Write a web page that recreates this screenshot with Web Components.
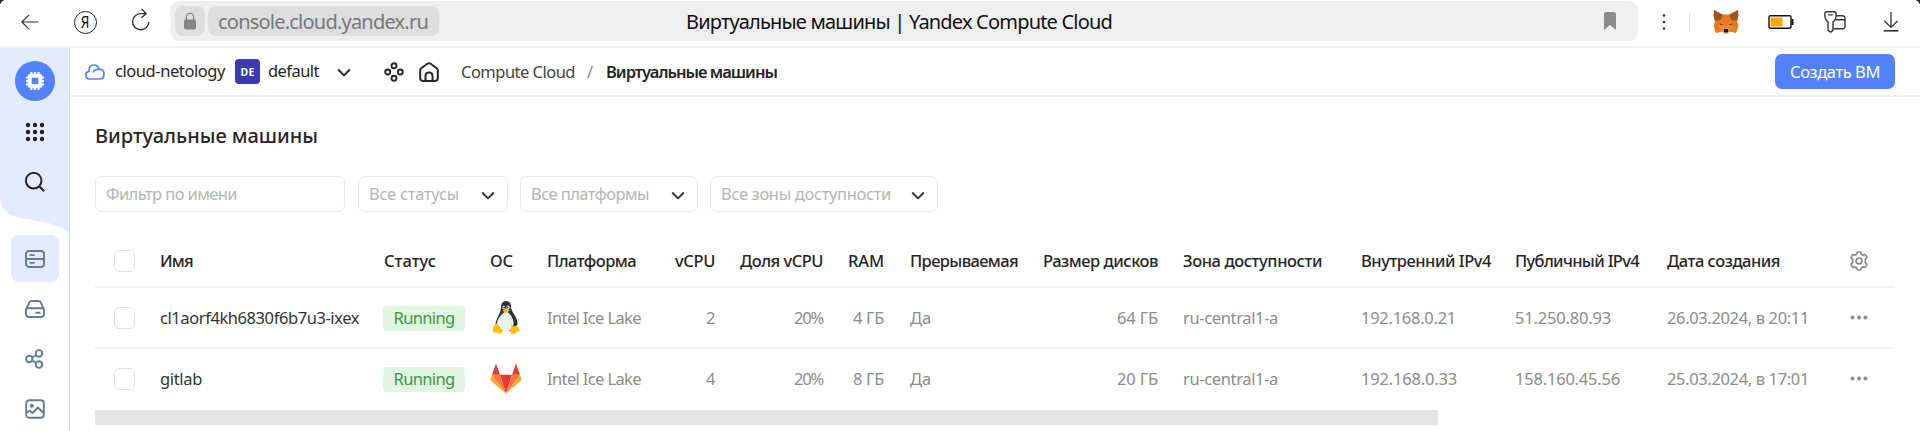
<!DOCTYPE html>
<html lang="ru">
<head>
<meta charset="utf-8">
<title>Виртуальные машины | Yandex Compute Cloud</title>
<style>
html,body{margin:0;height:100%;background:#fff;overflow:hidden}
body{font-family:"Noto Sans","Open Sans",sans-serif;color:#262626}
</style>
</head>
<body>
<console-app></console-app>
<script>
const define=(name,html,after)=>customElements.define(name,class extends HTMLElement{
  connectedCallback(){
    if(this.shadowRoot)return;
    const t=document.createElement('template');
    t.innerHTML=typeof html==='function'?html(this):html;
    this.attachShadow({mode:'open'}).append(t.content.cloneNode(true));
    if(after)after(this);
  }
});

/* Text run with a set measure: the tracking is adjusted to fill it. */
define('fit-text',e=>`<style>
:host{display:block;white-space:pre;flex:none;line-height:24px;font-size:${e.getAttribute('s')||16.5}px;width:${e.getAttribute('w')}px}
span{display:inline-block}</style><span>${e.textContent}</span>`,e=>{
  const s=e.shadowRoot.querySelector('span'),n=s.textContent.length;
  const d=(+e.getAttribute('w')-s.getBoundingClientRect().width)/n;
  s.style.letterSpacing=d.toFixed(3)+'px';
});

const P={
back:[18,16,'<path d="M17.5 8H1.2M8 .8.9 8 8 15.2" stroke-width="1.2"/>'],
reload:[20,24,'<path d="M17.800 14A8.100 8.100 0 1 1 9.700 5.600H15M10.500 1l4.700 4.600L10.500 9.800" stroke-width="1.400"/>'],
lock:[14,18,'<path d="M3.300 8V5a3.700 3.700 0 0 1 7.400 0v3" stroke-width="1.300"/><rect x="1" y="7.500" width="12" height="10" rx="2" fill="currentColor" stroke="none"/>'],
bookmark:[14,18,'<path d="M3 0h8a2 2 0 0 1 2 2v16l-6-5-6 5V2a2 2 0 0 1 2-2z" fill="currentColor" stroke="none"/>'],
more:[4,18,'<g fill="currentColor" stroke="none"><circle cx="2" cy="2.500" r="1.300"/><circle cx="2" cy="9" r="1.300"/><circle cx="2" cy="15.500" r="1.300"/></g>'],
fox:[26,24,'<g stroke="none"><path d="M1 0 9.500 4.500h7L25 0l.5 6-1.500 5 1.500 5-2.500 7-6.500-1.500L15 23.500h-4L9.500 21.500 3 23 .5 16 2 11 .5 6z" fill="#e97b1d"/><path d="M1 0 10 5 7.500 10 2 11 .8 6zM25 0l-9 5 2.500 5 5.500 1 1.200-5z" fill="#9b5425"/><path d="m8 11 5 5 5-5 2 5-4 5h-6l-4-5z" fill="#ee8b2d"/><path d="m6.500 13 4 1.800-3 .5zM19.500 13l-4 1.800 3 .5z" fill="#6b3b25"/><path d="m10.500 19 5 0 1 3.500-2 1h-3l-2-1z" fill="#d8c4b0"/><path d="M11 19h4l.5 2.500-1 1h-3l-1-1z" fill="#181818"/></g>'],
battery:[26,16,'<rect x="1" y="1.700" width="22" height="12.500" rx="1.500" stroke="#111" stroke-width="1.400"/><path d="M24.500 5v6" stroke="#111" stroke-width="2"/><path d="M2.500 3.500h12v9h-12z" fill="#ffa500" stroke="none"/>'],
keys:[22,22,'<path d="M4 10.800C1.800 9.500.8 5.800.8 3.200.8 1.400 1.600.7 3.200.7h6.600c1.600 0 2.400.7 2.400 2.500 0 2.600-1 6.300-3.200 7.600v8.400L6.800 21.200 4 19.200zM4.200 3.900h4.600" stroke-width="1.400"/><path d="M12.500 4.700h6a2.500 2.500 0 0 1 2.500 2.500v8a2.500 2.500 0 0 1-2.500 2.500H9.500M11.500 8.800H21" stroke-width="1.400"/>'],
download:[16,20,'<path d="M8 0v15M1.500 9 8 15.400 14.500 9" stroke-width="1.300"/><path d="M.7 18.800h14.600" stroke-width="1.600"/>'],
chip:[20,20,'<rect x="4.700" y="4.700" width="10.600" height="10.600" rx="1" stroke-width="4"/><path d="M6.400 4V1M10 4V1M13.600 4V1M6.400 19v-3M10 19v-3M13.600 19v-3M4 6.400H1M4 10H1M4 13.600H1M19 6.400h-3M19 10h-3M19 13.600h-3" stroke-width="2"/>'],
grid:[20,20,'<g fill="currentColor" stroke="none">'+[3,10,17].flatMap(y=>[3,10,17].map(x=>`<circle cx="${x}" cy="${y}" r="2.200"/>`)).join('')+'</g>'],
search:[20,20,'<circle cx="8.700" cy="8.700" r="7.800" stroke-width="1.900"/><path d="m14.200 14.200 5 5" stroke-width="2"/>'],
server:[20,18,'<rect x="1" y="1" width="18" height="16" rx="3" stroke-width="1.900"/><path d="M1 9h18M4.500 5.200h5M4.500 12.800h5" stroke-width="1.800"/>'],
disk:[20,18,'<path d="M1 9.500 4.200 2.600Q5 1 6.800 1h6.400q1.800 0 2.600 1.600L19 9.500V14q0 3-3 3H4q-3 0-3-3zM1.500 8.200h17M10.500 12.800h5" stroke-width="1.900"/>'],
share:[20,20,'<circle cx="4.300" cy="10" r="3.200" stroke-width="1.900"/><circle cx="14" cy="4.400" r="3.300" stroke-width="1.900"/><circle cx="14" cy="15.600" r="3.300" stroke-width="1.900"/><path d="m7 8.500 4.200-2.300M7 11.500l4.200 2.300" stroke-width="1.700"/>'],
image:[20,20,'<rect x="1.200" y="1.200" width="17.600" height="17.600" rx="3" stroke-width="1.900"/><circle cx="6.800" cy="6.800" r="2" fill="currentColor" stroke="none"/><path d="m2 13.500 2.500-1.800 3 2.300 5.500-5.500 5.500 5.500" stroke-width="1.900"/>'],
cloud:[20,16,'<path d="M4.800 15a3.900 3.900 0 0 1-.9-7.700Q3.800 1 9 1q4 0 5.300 4.200Q19 5.500 19 10q0 5-4.500 5zM8 8.500Q9.500 5.300 14.300 5.200" stroke-width="1.700"/>'],
chev:[14,9,'<path d="m1.200 1.500 5.800 5.800 5.800-5.800" stroke-width="1.900"/>'],
dots4:[20,20,'<g stroke-width="1.900"><circle cx="10" cy="3.700" r="2.500"/><circle cx="10" cy="16.300" r="2.500"/><circle cx="3.700" cy="10" r="2.500"/><circle cx="16.300" cy="10" r="2.500"/></g>'],
home:[20,20,'<path d="M1.200 8.200Q1.200 7 2.300 6.200L8.300 1.700Q10 .6 11.700 1.700l6 4.500q1.100.8 1.100 2V16q0 3-3 3H4.200q-3 0-3-3zM6.500 19v-5q0-3.500 3.500-3.500t3.500 3.500v5" stroke-width="2"/>'],
gear:[20,20,'<path d="M7.600 3.300 8 1.700Q8.200 1 9 1h2q.8 0 1 .7l.4 1.600 1.400.8 1.600-.5q.8-.2 1.200.5l1 1.700q.4.7-.1 1.300L16.300 8.300v3.400l1.200 1.200q.5.600.1 1.300l-1 1.700q-.4.700-1.200.5l-1.600-.5-1.400.8-.4 1.600q-.2.700-1 .7H9q-.8 0-1-.7l-.4-1.600-1.400-.8-1.600.5q-.8.200-1.200-.5l-1-1.700q-.4-.7.1-1.300l1.200-1.200V8.300L2.500 7.100Q2 6.500 2.400 5.800l1-1.700q.4-.7 1.200-.5l1.600.5z" stroke-width="1.700"/><circle cx="10" cy="10" r="2.900" stroke-width="1.700"/>'],
dots3:[18,5,'<g fill="currentColor" stroke="none"><circle cx="2.500" cy="2.500" r="2"/><circle cx="9" cy="2.500" r="2"/><circle cx="15.500" cy="2.500" r="2"/></g>'],
tux:[28,34,'<g stroke="none"><path d="M14 0c3.500 0 5 2.500 5 6 0 5 6.500 9 6.500 17l-3 7H6l-2.500-7C4.500 16 9 12 9 7c0-4 1.500-7 5-7z" fill="#263238"/><path d="M14 10c4 2 8.500 9 7.500 14-.8 4-3.500 6.500-7.500 6.500S6 28 5 24c-.8-5 4-11 9-14z" fill="#eceff1"/><ellipse cx="11.800" cy="6.500" rx="1.400" ry="1.900" fill="#eceff1"/><ellipse cx="16" cy="6.500" rx="1.700" ry="1.900" fill="#eceff1"/><circle cx="12.200" cy="6.500" r=".9" fill="#263238"/><circle cx="15.500" cy="6.500" r=".9" fill="#263238"/><path d="m14 7.300 4 2-4 3-3.500-2.500z" fill="#ffc107"/><path d="M5 22 10.500 29.500Q11 33 7.500 32.800L.5 30.500l1-5zM19.500 22.500l1.500 3 4-1 3 5-6.500 3.500q-3.500.5-3-3z" fill="#ffc107"/></g>'],
gitlab:[32,31,'<g stroke="none"><path d="m6 .5-4 11.300h8zM26 .5l4 11.300h-8z" fill="#e53935"/><path d="m16 30.500-6-18.700h12z" fill="#e53935"/><path d="M16 30.500 2 11.800h8zM16 30.500l14-18.700h-8z" fill="#ff7043"/><path d="M16 30.500 2 11.800.2 17zM16 30.500l14-18.700 1.800 5.200z" fill="#ffa726"/></g>']
};
define('ui-icon',e=>{const [w,h,p]=P[e.getAttribute('n')];return `<style>:host{display:block;flex:none;width:${w}px;height:${h}px}svg{display:block}</style><svg width="${w}" height="${h}" viewBox="0 0 ${w} ${h}" fill="none" stroke="currentColor" stroke-linejoin="round">${p}</svg>`});

define('browser-bar',`<style>
:host{display:flex;height:46px;box-sizing:border-box;align-items:flex-start;background:#fff;border-bottom:0;position:relative;color:#333;overflow:hidden}
:host::before,:host::after{content:"";position:absolute;top:0;width:7px;height:7px}
:host::before{left:0;background:radial-gradient(circle at 100% 100%,transparent 7px,#333 7.500px)}
:host::after{right:0;background:radial-gradient(circle at 0 100%,transparent 7px,#333 7.500px)}
.nav{display:flex;width:170px;flex:none;height:44px;align-items:center}
.nav ui-icon:first-child{margin-left:21px}
.nav ui-icon:last-child{margin-top:-4px}
.ya{width:21px;height:21px;border:1.300px solid #222;border-radius:50%;margin:0 34px 0 35px;display:flex;align-items:center;justify-content:center;font:16px/1 "Noto Sans",sans-serif;color:#111}
.ya span{display:block;transform:scaleX(.85)}
.bar{width:1468px;height:40px;margin-top:1px;border-radius:9px;background:#efefef;display:flex;align-items:center;box-sizing:border-box;padding-left:5px;flex:none}
.bar fit-text{padding-top:2px}
.lock{width:30px;height:30px;border-radius:8px;background:#dedede;display:flex;align-items:center;justify-content:center;color:#858585}
.url{width:231px;height:30px;border-radius:8px;background:#dedede;margin-left:3px;padding-left:10px;box-sizing:border-box;color:#777;display:flex;align-items:center}
.t{color:#111;margin-left:247px}
.bm{color:#8c8c8c;margin-left:491px}
.ext{display:flex;height:43px;align-items:center;flex:none}
.sep{width:1px;height:20px;background:#ddd;margin:0 23px 0 23px}
</style>
<div class="nav"><ui-icon n="back"></ui-icon><div class="ya"><span>Я</span></div><ui-icon n="reload"></ui-icon></div>
<div class="bar"><div class="lock"><ui-icon n="lock"></ui-icon></div><div class="url"><fit-text s="20" w="210">console.cloud.yandex.ru</fit-text></div>
<fit-text class="t" s="20" w="426">Виртуальные машины | Yandex Compute Cloud</fit-text><ui-icon class="bm" n="bookmark"></ui-icon></div>
<div class="ext"><ui-icon n="more" style="margin-left:24px"></ui-icon><div class="sep"></div><ui-icon n="fox"></ui-icon><ui-icon n="battery" style="margin-left:29px"></ui-icon><ui-icon n="keys" style="margin-left:30px"></ui-icon><ui-icon n="download" style="margin-left:37px"></ui-icon></div>`);

define('side-rail',`<style>
:host{display:flex;flex-direction:column;align-items:center;width:70px;box-sizing:border-box;border-right:1px solid #d9dbe3;flex:none;position:relative;color:#222}
.bg{position:absolute;left:0;top:0;z-index:-1}
.chip{width:40px;height:40px;border-radius:50%;background:#5282ff;color:#fff;display:flex;align-items:center;justify-content:center;margin:13px 0 21px}
.sel{width:48px;height:47px;border-radius:8px;background:#e4eaff;display:flex;align-items:center;justify-content:center}
.low{display:flex;flex-direction:column;align-items:center;color:#647b91;margin-top:43px;margin-left:1px}
</style>
<svg class="bg" width="69" height="187" viewBox="0 0 69 187"><path d="M0 0h69v185Q62 179 48 175L20 170Q0 166 0 148z" fill="#e4eaff"/></svg>
<div class="chip"><ui-icon n="chip"></ui-icon></div><ui-icon n="grid" style="margin-left:1px"></ui-icon><ui-icon n="search" style="margin:30px 0 0 1px"></ui-icon>
<div class="low"><div class="sel"><ui-icon n="server"></ui-icon></div><ui-icon n="disk" style="margin-top:18px"></ui-icon><ui-icon n="share" style="margin-top:31px"></ui-icon><ui-icon n="image" style="margin-top:30px"></ui-icon></div>`);

define('crumb-bar',`<style>
:host{display:flex;align-items:center;height:49px;box-sizing:border-box;border-bottom:2px solid #f1f1f1;padding-left:15px}
.de{width:25px;height:25px;border-radius:4px;background:#3a3cae;color:#fff;display:flex;align-items:center;justify-content:center;font-weight:700;margin:0 8px 0 10px}
.up{margin-top:-2px}
.btn{margin-left:auto;margin-right:25px;width:120px;height:35px;border-radius:7px;background:#5282ff;color:#fff;display:flex;align-items:center;justify-content:center}
</style>
<ui-icon n="cloud" style="color:#5282ff"></ui-icon><fit-text class="up" w="110" style="margin-left:10px">cloud-netology</fit-text>
<div class="de"><fit-text s="10.500" w="14">DE</fit-text></div><fit-text class="up" w="51">default</fit-text><ui-icon n="chev" style="margin:2px 0 0 18px"></ui-icon>
<ui-icon n="dots4" style="margin-left:33px"></ui-icon><ui-icon n="home" style="margin-left:15px"></ui-icon>
<fit-text w="114" style="margin-left:22px;color:#444">Compute Cloud</fit-text><fit-text w="7" style="margin-left:12px;color:#888">/</fit-text><fit-text w="171" style="margin-left:12px;font-weight:600">Виртуальные машины</fit-text>
<div class="btn"><fit-text w="90">Создать ВМ</fit-text></div>`);

define('filter-box',e=>`<style>
:host{display:flex;align-items:center;justify-content:space-between;box-sizing:border-box;width:${e.getAttribute('bw')}px;height:36px;border:1.500px solid #e8e8e8;border-radius:7px;padding:0 12px 0 10px;color:#b5b5b5;flex:none}
ui-icon{color:#333;margin-top:3px}</style><slot></slot>${e.hasAttribute('select')?'<ui-icon n="chev"></ui-icon>':''}`);

define('vm-tag',`<style>:host{display:flex;justify-content:center;align-items:center;width:82px;height:25px;border-radius:4px;background:#e1f6e1;color:#439445;margin:1px 0 0 -1px}</style><fit-text w="61">Running</fit-text>`);

define('vm-row',`<style>
:host{display:grid;grid-template-columns:65px 224px 106px 57px 93px 75px 108px 61px 134px 140px 203px 154px 152px 171px 57px;align-items:center;box-sizing:border-box;border-bottom:2px solid #f1f1f1;height:61px;color:#8c8c8c}
:host([head]){height:52px;color:#262626;font-weight:500}
:host([last]){border-bottom-color:transparent}
i{display:block;width:21px;height:22px;box-sizing:border-box;border:1.500px solid #e2e2e2;border-radius:5px;margin-left:19px}
::slotted(.r){justify-self:end}
::slotted(.p){margin-left:26px}
::slotted(.z){margin-left:25px}
::slotted(.n){color:#333}
</style><i></i><slot></slot>`);

const row=(name,nw,icon,cpu,ram,disk,ip,iw,pub,pw,date)=>`<fit-text class="n" w="${nw}">${name}</fit-text><vm-tag></vm-tag>${icon}<fit-text w="94">Intel Ice Lake</fit-text><fit-text class="r" w="9">${cpu}</fit-text><fit-text class="r" w="29">20%</fit-text><fit-text class="r" w="31">${ram}</fit-text><fit-text class="p" w="21">Да</fit-text><fit-text class="r" w="41">${disk}</fit-text><fit-text class="z" w="95">ru-central1-a</fit-text><fit-text w="${iw}">${ip}</fit-text><fit-text w="${pw}">${pub}</fit-text><fit-text w="142">${date}</fit-text><ui-icon n="dots3" style="margin-left:12px"></ui-icon>`;

define('vm-table',`<style>
:host{display:block;width:1800px}
.scroll{width:1343px;height:14.500px;background:#e3e3e3}
</style>
<vm-row head><fit-text w="33">Имя</fit-text><fit-text w="52">Статус</fit-text><fit-text w="23">ОС</fit-text><fit-text w="89">Платформа</fit-text><fit-text class="r" w="40">vCPU</fit-text><fit-text class="r" w="83">Доля vCPU</fit-text><fit-text class="r" w="36">RAM</fit-text><fit-text class="p" w="108">Прерываемая</fit-text><fit-text class="r" w="115">Размер дисков</fit-text><fit-text class="z" w="139">Зона доступности</fit-text><fit-text w="130">Внутренний IPv4</fit-text><fit-text w="124">Публичный IPv4</fit-text><fit-text w="113">Дата создания</fit-text><ui-icon n="gear" style="margin-left:11px;color:#888"></ui-icon></vm-row>
<vm-row>${row('cl1aorf4kh6830f6b7u3-ixex',199,'<ui-icon n="tux" style="margin-left:2px"></ui-icon>',2,'4 ГБ','64 ГБ','192.168.0.21',95,'51.250.80.93',96,'26.03.2024, в 20:11')}</vm-row>
<vm-row last>${row('gitlab',42,'<ui-icon n="gitlab"></ui-icon>',4,'8 ГБ','20 ГБ','192.168.0.33',96,'158.160.45.56',105,'25.03.2024, в 17:01')}</vm-row>
<div class="scroll"></div>`);

define('console-app',`<style>
:host{display:block;width:1920px;height:431px;overflow:hidden}
.body{display:flex;height:385px;position:relative;z-index:0;box-sizing:border-box;border-top:2px solid #f1f1f1}
main{flex:1;min-width:0}
section{padding:27px 0 0 25px}
.f{display:flex;gap:12px;margin:28px 0 24px}
.f :first-child{margin-right:1px}
</style>
<browser-bar></browser-bar>
<div class="body"><side-rail></side-rail><main><crumb-bar></crumb-bar><section>
<fit-text s="20" w="223" style="font-weight:500;line-height:24px">Виртуальные машины</fit-text>
<div class="f"><filter-box bw="250"><fit-text w="131">Фильтр по имени</fit-text></filter-box><filter-box bw="150" select><fit-text w="90">Все статусы</fit-text></filter-box><filter-box bw="178" select><fit-text w="118">Все платформы</fit-text></filter-box><filter-box bw="228" select><fit-text w="170">Все зоны доступности</fit-text></filter-box></div>
<vm-table></vm-table></section></main></div>`);
</script>
</body>
</html>
